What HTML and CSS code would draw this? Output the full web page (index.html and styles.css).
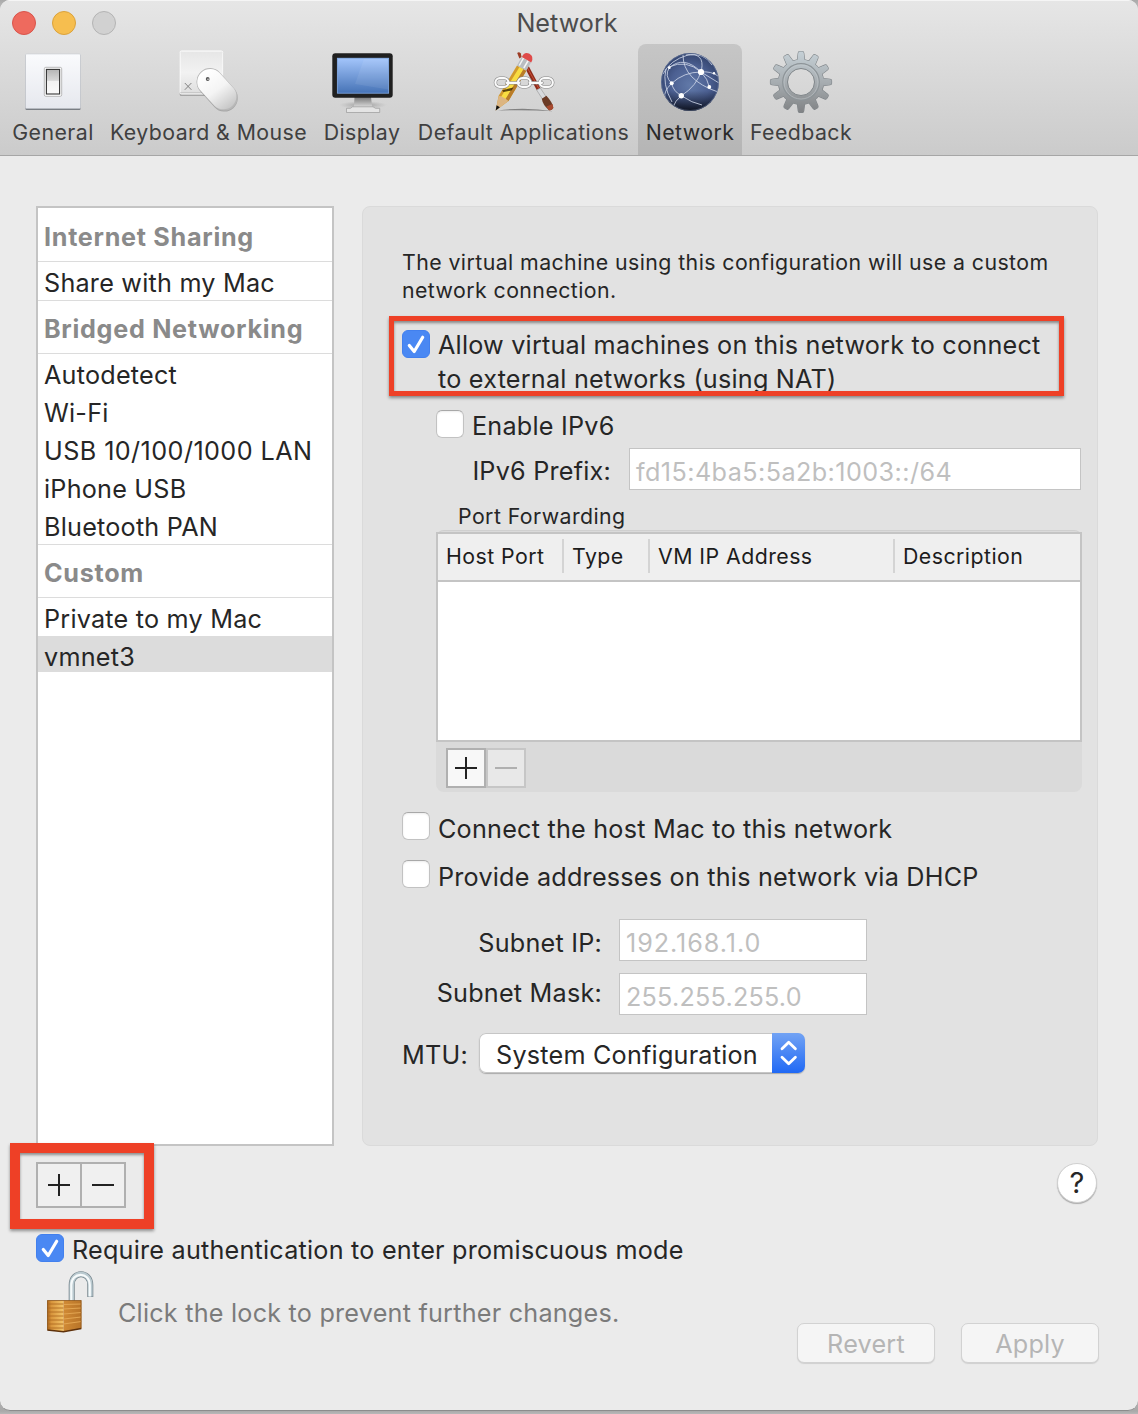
FILE: index.html
```html
<!DOCTYPE html>
<html lang="en">
<head>
<meta charset="utf-8">
<title>Network</title>
<link rel="stylesheet" href="styles.css">
</head>
<body>
<div class="window">
  <header class="titlebar">
    <div class="title-row">
      <div class="lights"><i class="light close"></i><i class="light minimize"></i><i class="light zoom"></i></div>
      <h1 class="title">Network</h1>
    </div>
    <nav class="toolbar">
      <a class="tool tool-general">
        <svg class="tool-icon" viewBox="0 0 64 64">
          <defs>
            <linearGradient id="plate" x2="0" y2="1"><stop offset="0" stop-color="#fafbfd"/><stop offset="1" stop-color="#e6e8ee"/></linearGradient>
            <linearGradient id="rocker" x2="0" y2="1"><stop offset="0" stop-color="#b5b5b5"/><stop offset=".45" stop-color="#d8d8d8"/><stop offset=".46" stop-color="#f1f1f1"/><stop offset="1" stop-color="#fafafa"/></linearGradient>
          </defs>
          <rect x="4.5" y="4.5" width="55" height="55.5" rx="1" fill="#777b82"/>
          <rect x="4.5" y="4" width="55" height="54.6" rx="1" fill="url(#plate)" stroke="#c3c6cc" stroke-width=".5"/>
          <rect x="23.3" y="17.3" width="17.4" height="29" rx="1.5" fill="#fff" stroke="#a8a8a8" stroke-width=".8"/>
          <rect x="25.4" y="19.4" width="13.2" height="24.6" fill="url(#rocker)" stroke="#333" stroke-width="1.1"/>
        </svg>
        <span class="tool-label">General</span>
      </a>
      <a class="tool tool-keyboard">
        <svg class="tool-icon" viewBox="0 0 64 64">
          <defs>
            <linearGradient id="key" x2="0" y2="1"><stop offset="0" stop-color="#e6e6e6"/><stop offset=".5" stop-color="#f2f2f2"/><stop offset="1" stop-color="#dedede"/></linearGradient>
            <linearGradient id="mouse" x1=".2" y1=".1" x2=".8" y2=".95"><stop offset="0" stop-color="#fff"/><stop offset=".5" stop-color="#f4f4f4"/><stop offset="1" stop-color="#c9c9c9"/></linearGradient>
          </defs>
          <rect x="2.700" y="1.5" width="43.5" height="44.5" rx="1.5" fill="#a5a5a5"/>
          <rect x="3" y="1" width="42.8" height="43" rx="1.5" fill="url(#key)" stroke="#fff"/>
          <path d="M3.300 42.7h42" stroke="#bbb" stroke-width=".8"/>
          <path d="M7.8 33l6.6 6.8M14.4 33l-6.6 6.8" stroke="#777" stroke-width=".9"/>
          <path d="M33 32.300L47.400 48.300" stroke="#8a8a8a" stroke-width="26.600" stroke-linecap="round" opacity=".6"/>
          <path d="M33 31.300L47.400 47.300" stroke="#b8b8b8" stroke-width="26.600" stroke-linecap="round"/>
          <path d="M22.900 39.800A13 13 0 0 1 42.400 22.700L57 38.800A13 13 0 0 1 37.700 56z" fill="url(#mouse)"/>
          <circle cx="30.700" cy="29" r="1.900" fill="#555"/><circle cx="31" cy="29.200" r=".8" fill="#ddd"/>
        </svg>
        <span class="tool-label">Keyboard &amp; Mouse</span>
      </a>
      <a class="tool tool-display">
        <svg class="tool-icon" viewBox="0 0 64 64">
          <defs>
            <linearGradient id="screen" x2="0" y2="1"><stop offset="0" stop-color="#a3c5fb"/><stop offset="1" stop-color="#4673b6"/></linearGradient>
            <linearGradient id="neck" x2="0" y2="1"><stop offset="0" stop-color="#777"/><stop offset="1" stop-color="#e8e8e8"/></linearGradient>
            <radialGradient id="deskshade"><stop offset="0" stop-color="#777" stop-opacity=".7"/><stop offset="1" stop-color="#999" stop-opacity="0"/></radialGradient>
          </defs>
          <ellipse cx="33" cy="55" rx="24" ry="4" fill="url(#deskshade)"/>
          <path d="M24.500 47h16.500l1 8.500q.3 3 2.500 3h-23q2.200 0 2.500-3z" fill="url(#neck)"/>
          <path d="M16.500 58.300h4l2-1.500h20.500l2.500 1.500h4.200v4.200h-33.200z" fill="#e4e4e4" stroke="#999" stroke-width=".7"/>
          <rect x="2.300" y="3.300" width="60.400" height="44.400" rx="3" fill="#202020"/>
          <rect x="7.300" y="8.200" width="51.400" height="35" fill="url(#screen)" stroke="#8ab6f4" stroke-width=".7"/>
          <path d="M34 9h24.300v30.500L25 34z" fill="#fff" opacity=".07"/>
        </svg>
        <span class="tool-label">Display</span>
      </a>
      <a class="tool tool-apps">
        <svg class="tool-icon" viewBox="0 0 64 64">
          <path d="M6 60.500q26-4 56 .7q-28-1.600-56-.7z" fill="#555" opacity=".65"/>
          <path d="M25.200 3q1.800-2 3.600.6l.8 3.400-2.200 1.600z" fill="#9c3c24"/>
          <path d="M33.200 18.500l3.600-2.200L48.300 38l-3.600 2.100z" fill="#8f2b1a"/>
          <path d="M35.500 18L46.800 38.500" stroke="#cf553b" stroke-width=".9"/>
          <path d="M44.700 40.100l3.600-2.100 6 9-3.600 2.400z" fill="#d8dadd" stroke="#888" stroke-width=".5"/>
          <path d="M49.800 48.800l4.600-3Q61 53 61.300 57.800q-2 3.400-4.600 2.200Q50.800 55 49.800 48.800z" fill="#6b3a25"/>
          <path d="M54.500 56.500l6-2.500.8 4q-2 3.300-4.600 2z" fill="#a8492f"/>
          <path d="M3.700 60.500l3-14.700L25 15.500l9.300 5.300L16.500 51z" fill="#d29a2c"/>
          <path d="M9 47L27.500 17l4 2.300L13.500 49.500z" fill="#f8dc42"/>
          <path d="M13.300 49.500L31.500 19.200l2.800 1.600L16.500 51z" fill="#b97c28"/>
          <path d="M3.700 60.500l3-14.700 3 .8 3.500 2 3.300 2.400z" fill="#dcb581"/>
          <path d="M3.700 60.500l.9-5.200 3.300 2z" fill="#111"/>
          <path d="M25 15.500l4.600-8.300 9.400 5.400-4.700 8.200z" fill="#b9bdc1"/>
          <path d="M27.300 15.500l4.200-7.500M31.800 18l4.400-7.500" stroke="#f5f5f5" stroke-width="1.500"/>
          <path d="M29.900 7q2.300-5.600 7.600-3.200 5 3 1.700 8.700z" fill="#df4a49"/>
          <path d="M10 40.500l7-2 4.500-1-2 3-8 1.600z" fill="#332200" opacity=".8"/>
          <g fill="none" stroke="#858585" stroke-width="3.300"><rect x="3.400" y="28.200" width="13" height="8.600" rx="4.300"/><rect x="26" y="28.200" width="12.500" height="8.600" rx="4.300"/><rect x="47.800" y="28.200" width="13" height="8.600" rx="4.300"/><path d="M14.500 32.800h13M37.500 32.800h12.500" stroke-linecap="round"/></g>
          <g fill="none" stroke="#fafafa" stroke-width="2.200"><rect x="3.400" y="28.200" width="13" height="8.600" rx="4.300"/><rect x="26" y="28.200" width="12.500" height="8.600" rx="4.300"/><rect x="47.800" y="28.200" width="13" height="8.600" rx="4.300"/><path d="M14.500 32.800h13M37.500 32.800h12.500" stroke-linecap="round"/></g>
        </svg>
        <span class="tool-label">Default Applications</span>
      </a>
      <a class="tool tool-network selected">
        <svg class="tool-icon" viewBox="0 0 64 64">
          <defs>
            <radialGradient id="globe" cx=".5" cy=".55" r=".55"><stop offset="0" stop-color="#6179a8"/><stop offset=".6" stop-color="#4c6092"/><stop offset="1" stop-color="#33446e"/></radialGradient>
            <linearGradient id="globeshade" x2="0" y2="1"><stop offset=".65" stop-color="#0b1020" stop-opacity="0"/><stop offset="1" stop-color="#05070d" stop-opacity=".85"/></linearGradient>
            <clipPath id="globeclip"><circle cx="32" cy="32" r="28.600"/></clipPath>
          </defs>
          <circle cx="32" cy="32" r="29" fill="url(#globe)"/>
          <circle cx="32" cy="32" r="29" fill="url(#globeshade)"/>
          <g clip-path="url(#globeclip)" fill="none" stroke="#d5dded" stroke-width=".8">
            <path d="M11.300 17.700Q26 5 43 22Q50 29 51.300 37"/><path d="M25 5Q25 30 60 42"/><path d="M28 5Q47 2 43.500 20Q39 36 23.300 45.700Q17 51 15 57"/>
            <path d="M13.700 33.300Q26 22 43 22Q53 21 60 26"/><path d="M13.700 33.300Q15 41 23.300 45.700Q34 53 44 55"/><path d="M11.300 17.700Q6 26 13.700 33.300"/>
            <path d="M11 17Q28 9 43 22L61 33"/><path d="M5 24Q12 10 30 5Q46 2 54 15"/><path d="M13.700 33.300Q5 42 7 48"/><path d="M8 19Q4 34 14 52"/>
          </g>
          <g fill="#fff"><circle cx="43" cy="22" r="3.100"/><circle cx="13.700" cy="33.300" r="2"/><circle cx="23.300" cy="45.700" r="2.700"/><circle cx="51.300" cy="37" r="1.900"/><circle cx="11.300" cy="17.700" r="1.400"/><circle cx="56" cy="23.300" r="1.200"/></g>
          <circle cx="32" cy="32" r="28.500" fill="none" stroke="#8090b4" stroke-width=".8" opacity=".5"/>
        </svg>
        <span class="tool-label">Network</span>
      </a>
      <a class="tool tool-feedback">
        <svg class="tool-icon" viewBox="0 0 64 64">
          <defs>
            <linearGradient id="steel" gradientUnits="userSpaceOnUse" x1="0" y1="0" x2="0" y2="64"><stop offset="0" stop-color="#c7d2d8"/><stop offset=".5" stop-color="#a7adb1"/><stop offset="1" stop-color="#7e8082"/></linearGradient>
            <path id="tooth" d="M28.300 11L29.300 3Q29.500 1.500 30.500 1.500h3Q34.500 1.500 34.700 3L35.700 11z"/>
            <g id="teeth"><use href="#tooth"/><use href="#tooth" transform="rotate(30 32 32)"/><use href="#tooth" transform="rotate(60 32 32)"/><use href="#tooth" transform="rotate(90 32 32)"/><use href="#tooth" transform="rotate(120 32 32)"/><use href="#tooth" transform="rotate(150 32 32)"/><use href="#tooth" transform="rotate(180 32 32)"/><use href="#tooth" transform="rotate(210 32 32)"/><use href="#tooth" transform="rotate(240 32 32)"/><use href="#tooth" transform="rotate(270 32 32)"/><use href="#tooth" transform="rotate(300 32 32)"/><use href="#tooth" transform="rotate(330 32 32)"/></g>
            <mask id="gearmask"><g fill="#fff"><use href="#teeth"/></g><circle cx="32" cy="32" r="22.500" fill="#fff"/><circle cx="32" cy="32" r="13.300" fill="#000"/></mask>
          </defs>
          <g fill="none" stroke="#80868a" stroke-width="1.200"><use href="#teeth"/><circle cx="32" cy="32" r="22.500"/></g>
          <rect width="64" height="64" fill="url(#steel)" mask="url(#gearmask)"/>
          <circle cx="32" cy="32" r="18.300" fill="none" stroke="#8d9498" stroke-width="1.200"/>
          <circle cx="32" cy="32" r="17" fill="none" stroke="#c8cfd2" stroke-width=".7" opacity=".7"/>
          <circle cx="32" cy="32" r="13.500" fill="none" stroke="#80868a" stroke-width="1"/>
        </svg>
        <span class="tool-label">Feedback</span>
      </a>
    </nav>
  </header>

  <main class="content">
    <div class="columns">
      <aside class="sidebar">
        <h2 class="group">Internet Sharing</h2>
        <div class="net">Share with my Mac</div>
        <h2 class="group">Bridged Networking</h2>
        <div class="net">Autodetect</div>
        <div class="net">Wi-Fi</div>
        <div class="net wide">USB 10/100/1000 LAN</div>
        <div class="net">iPhone USB</div>
        <div class="net">Bluetooth PAN</div>
        <h2 class="group">Custom</h2>
        <div class="net">Private to my Mac</div>
        <div class="net current">vmnet3</div>
      </aside>

      <section class="panel">
        <p class="intro">The virtual machine using this configuration will use a custom<br>network connection.</p>
        <div class="check nat">
          <span class="box checked"><svg viewBox="0 0 28 28"><path d="M7.300 15.500l4.900 6L20.700 7.300"/></svg></span>
          <span class="check-text">Allow virtual machines on this network to connect<br>to external networks (using NAT)</span>
          <div class="callout callout-nat"></div>
        </div>
        <div class="check ipv6"><span class="box"></span><span class="check-text">Enable IPv6</span></div>
        <div class="prefix-row"><label>IPv6 Prefix:</label><div class="field wide">fd15:4ba5:5a2b:1003::/64</div></div>
        <div class="forward-title">Port Forwarding</div>
        <div class="forward">
          <div class="table">
            <div class="table-head"><span class="col host">Host Port</span><span class="col type">Type</span><span class="col vm">VM IP Address</span><span class="col desc">Description</span></div>
          </div>
          <div class="forward-foot"><span class="square plus"></span><span class="square minus disabled"></span></div>
        </div>
        <div class="check host-mac"><span class="box"></span><span class="check-text">Connect the host Mac to this network</span></div>
        <div class="check dhcp"><span class="box"></span><span class="check-text">Provide addresses on this network via DHCP</span></div>
        <div class="subnet-row"><label>Subnet IP:</label><div class="field address">192.168.1.0</div></div>
        <div class="subnet-row mask"><label>Subnet Mask:</label><div class="field">255.255.255.0</div></div>
        <div class="mtu-row"><label>MTU:</label>
          <div class="select"><span class="select-text">System Configuration</span><span class="stepper"><svg viewBox="0 0 33 40"><path d="M10 15.800l6.700-6.600 6.700 6.600M10 24.200l6.700 6.600 6.700-6.600"/></svg></span></div>
        </div>
      </section>
    </div>

    <div class="list-actions">
      <div class="add-remove"><span class="square plus"></span><span class="square minus"></span><div class="callout callout-add"></div></div>
      <button class="help">?</button>
    </div>
    <div class="check promiscuous"><span class="box checked"><svg viewBox="0 0 28 28"><path d="M7.300 15.500l4.900 6L20.700 7.300"/></svg></span><span class="check-text">Require authentication to enter promiscuous mode</span></div>
    <footer class="footer">
      <div class="lock">
        <svg class="lock-icon" viewBox="0 0 60 68">
          <defs>
            <linearGradient id="front"><stop offset="0" stop-color="#a8641c"/><stop offset=".25" stop-color="#d8953c"/><stop offset="1" stop-color="#f3c468"/></linearGradient>
            <linearGradient id="side"><stop offset="0" stop-color="#d08a35"/><stop offset="1" stop-color="#b87428"/></linearGradient>
          </defs>
          <path d="M31.700 33V17C31.700 2.500 50.300 2.500 50.300 17V29" fill="none" stroke="#74838a" stroke-width="6"/>
          <path d="M31.700 33V17C31.700 2.500 50.300 2.500 50.300 17V28.600" fill="none" stroke="#b9c9cf" stroke-width="4.600"/>
          <path d="M31.300 33V17C31.300 4 49.600 3 49.800 17V28.500" fill="none" stroke="#f6fafb" stroke-width="2.200"/>
          <path d="M7.300 32.500H23.500V63.700L7.300 62z" fill="url(#front)"/>
          <path d="M23.500 32.500H41.300V60.500L23.500 63.700z" fill="url(#side)"/>
          <path d="M7.300 36h16.200M7.300 40h16.200M7.300 44h16.200M7.300 48h16.200M7.300 52h16.200M7.300 56h16.200M7.300 60h16.200" stroke="#b06c22" stroke-width=".9"/>
          <path d="M23.500 36.500l17.800-.5M23.500 41l17.800-1M23.500 46l17.800-1.500M23.500 51l17.800-2M23.500 56l17.800-2.500" stroke="#e2a552" stroke-width="1.200"/>
          <path d="M7.300 62l16.200 1.700 17.800-3.200" fill="none" stroke="#5e310b" stroke-width="1.400"/>
          <path d="M7.300 32.500h34M7.500 32.500V62M41.100 32.500v28" stroke="#8d561b" stroke-width=".8"/>
        </svg>
        <span class="lock-text">Click the lock to prevent further changes.</span>
      </div>
      <div class="actions"><button class="push">Revert</button><button class="push">Apply</button></div>
    </footer>
  </main>
</div>
</body>
</html>
```
FILE: styles.css
```css
* { box-sizing: border-box; }
body {
  margin: 0;
  height: 1414px;
  overflow: hidden;
  background: linear-gradient(#a9a9a9 0, #c8c8c8 12px, #b0b0b0 1400px, #a9a9a9 1411px, #b8b8b8 1414px);
  font-family: Inter, "Liberation Sans", sans-serif;
  font-size: 25.2px;
  letter-spacing: .22px;
  color: #262626;
}
h1, h2, p { margin: 0; font: inherit; }
button { font: inherit; letter-spacing: inherit; padding: 0; border: 0; }
svg { display: block; }

.window {
  height: 1411px;
  background: #ebebeb;
  border-radius: 10px;
  border-bottom: 1px solid #8c8c8c;
  overflow: hidden;
}

/* Title bar */
.titlebar {
  height: 156px;
  background: linear-gradient(#e6e6e6, #cbcbcb);
  border-top: 1px solid #f5f5f5;
  border-bottom: 1px solid #a6a6a6;
}
.title-row { display: flex; align-items: center; height: 43px; padding-left: 12px; }
.lights { display: flex; gap: 16px; width: 200px; }
.light { width: 24px; height: 24px; border-radius: 50%; border: 1px solid; }
.close { background: #ee6a5e; border-color: #d9544b; }
.minimize { background: #f6be4f; border-color: #dba23b; }
.zoom { background: #d1d1d1; border-color: #b4b4b4; }
.title { flex: 1; margin-right: 216px; text-align: center; color: #4d4d4d; line-height: 42px; letter-spacing: 0; }

.toolbar { display: flex; padding-left: 4px; }
.tool { display: flex; flex-direction: column; align-items: center; height: 111px; padding-top: 6px; border-radius: 8px 8px 0 0; }
.tool-general { width: 98px; }
.tool-keyboard { width: 213px; }
.tool-display { width: 94px; }
.tool-apps { width: 229px; }
.tool-network { width: 104px; }
.tool-feedback { width: 118px; }
.selected { background: linear-gradient(#c6c6c6, #b5b5b5); }
.tool-icon { width: 64px; height: 64px; }
.tool-label { font-size: 21.3px; line-height: 28px; margin-top: 4px; letter-spacing: .44px; color: #404040; white-space: nowrap; }
.selected .tool-label { color: #2a2a2a; }

/* Body */
.content { padding: 50px 39px 0 36px; }
.columns { display: flex; gap: 28px; height: 940px; margin-right: 1px; }
.sidebar { width: 298px; border: 2px solid #c4c4c4; background: #fff; }
.group { height: 54px; padding: 2px 0 0 6px; line-height: 54px; font-weight: 700; letter-spacing: .7px; color: #8a8a8a; box-shadow: inset 0 1px #dcdcdc, inset 0 -1px #dcdcdc; }
.group:first-child { box-shadow: inset 0 -1px #dcdcdc; }
.net { height: 38px; padding: 2px 0 0 6px; line-height: 38px; white-space: nowrap; }
.wide { letter-spacing: .42px; }
.current { height: 36px; background: #dcdcdc; }

.panel { width: 736px; padding: 41px 0 0 39px; background: #e2e2e2; border: 1px solid #dadada; border-radius: 8px; }
.intro { height: 80px; font-size: 21.3px; line-height: 28px; letter-spacing: .43px; white-space: nowrap; }

.check { display: flex; gap: 8px; align-items: flex-start; white-space: nowrap; }
.check-text { line-height: 34px; }
.box { flex: none; width: 28px; height: 28px; margin-top: 2px; border-radius: 6px; background: #fff; border: 1px solid #c2c2c2; border-top-color: #a8a8a8; box-shadow: inset 0 1px 2px #ececec; }
.checked { background: #4a88f3; border-color: #4280ee; box-shadow: none; }
.checked svg { width: 28px; height: 28px; margin: -1px; fill: none; stroke: #fff; stroke-width: 3.200; stroke-linecap: round; stroke-linejoin: round; }
.nat { position: relative; height: 80px; }
.ipv6 { height: 40px; padding-left: 34px; }
.ipv6 .check-text { line-height: 36px; }
.host-mac .check-text, .dhcp .check-text { line-height: 38px; }
.promiscuous .check-text { line-height: 36px; }

.field { height: 42px; padding: 3px 0 0 7px; line-height: 40px; background: #fff; border: 1px solid #c4c4c4; color: #bfbfbf; white-space: nowrap; }
.prefix-row { display: flex; gap: 18px; height: 56px; }
.prefix-row label { width: 209px; text-align: right; line-height: 46px; }
.prefix-row .field { width: 452px; padding-left: 6px; }
.forward-title { height: 26px; padding-left: 56px; font-size: 21.3px; line-height: 25px; letter-spacing: .43px; }

.forward { width: 646px; height: 262px; margin-left: 34px; border-top: 1px solid #cfcfcf; border-radius: 8px; background: #dadada; padding-top: 1px; }
.table { height: 210px; border: 2px solid #c4c4c4; background: #fff; }
.table-head { display: flex; align-items: center; height: 48px; padding-bottom: 3px; border-bottom: 2px solid #c4c4c4; background: #efefef; font-size: 21.3px; letter-spacing: .46px; color: #1c1c1c; }
.col { height: 34px; line-height: 35px; padding-left: 8px; border-right: 2px solid #d4d4d4; white-space: nowrap; }
.host { width: 126px; }
.type { width: 86px; }
.vm { width: 245px; }
.desc { border: 0; }
.forward-foot { display: flex; padding: 6px 10px; }

.square { position: relative; display: block; width: 40px; height: 40px; border: 2px solid #b0b0b0; background-color: #f8f8f8;
  background-image: linear-gradient(#222, #222), linear-gradient(#222, #222); background-repeat: no-repeat; background-position: center; }
.plus { background-size: 22px 2px, 2px 22px; }
.minus { background-size: 22px 2px, 0 0; }
.square.disabled { border-color: #c6c6c6; background-color: #e8e8e8; background-image: linear-gradient(#b0b0b0, #b0b0b0); background-size: 22px 2px; }

.host-mac { height: 48px; margin-top: 18px; }
.dhcp { height: 61px; }
.subnet-row { display: flex; gap: 17px; height: 54px; }
.subnet-row label { width: 200px; text-align: right; line-height: 48px; }
.mask label { line-height: 40px; }
.subnet-row .field { width: 248px; padding-left: 6px; }
.subnet-row .address { letter-spacing: .95px; }
.mtu-row { display: flex; gap: 12px; margin-top: 6px; line-height: 44px; }
.mtu-row label { width: 65px; white-space: nowrap; }
.select { display: flex; width: 326px; height: 40px; background: #fff; border-radius: 7px; box-shadow: inset 0 0 0 1px #c6c6c6, 0 1px 1px #aaa; }
.select-text { flex: 1; padding-left: 17px; white-space: nowrap; }
.stepper { width: 33px; height: 40px; border-radius: 0 7px 7px 0; background: linear-gradient(#72a3f4, #2069f5); }
.stepper svg { fill: none; stroke: #fff; stroke-width: 2.800; stroke-linecap: round; stroke-linejoin: round; }

/* Bottom controls */
.list-actions { display: flex; justify-content: space-between; padding-top: 16px; height: 86px; }
.add-remove { position: relative; display: flex; height: 46px; }
.add-remove .square { width: 46px; height: 46px; background-color: #f0f0f0; }
.add-remove .minus { margin-left: -2px; }
.help { width: 40px; height: 40px; margin: 1px 2px 0 0; border-radius: 50%; background: #fff; border: 1px solid #d0d0d0; box-shadow: 0 1px 1px #aaa; color: #262626; font-size: 29px; letter-spacing: 0; line-height: 38px; }
.footer { display: flex; justify-content: space-between; }
.lock { display: flex; gap: 18px; padding: 0 0 0 4px; }
.lock-icon { width: 60px; height: 68px; }
.lock-text { line-height: 91px; color: #7b7b7b; white-space: nowrap; }
.promiscuous { height: 36px; }
.actions { display: flex; gap: 26px; padding-top: 55px; }
.push { width: 138px; height: 40px; border: 1px solid #d2d2d2; border-radius: 7px; background: #f5f5f5; box-shadow: 0 1px 1px #d0d0d0; color: #b5b5b5; line-height: 41px; }

/* Red highlight frames */
.callout { position: absolute; border: 5px solid #ee4026; box-shadow: 0 2px 3px rgba(0,0,0,.4), inset 0 2px 3px rgba(0,0,0,.4); }
.callout-nat { left: -13px; top: -12px; width: 675px; height: 80px; }
.callout-add { left: -26px; top: -19px; width: 144px; height: 86px; border-width: 10px; }
```
